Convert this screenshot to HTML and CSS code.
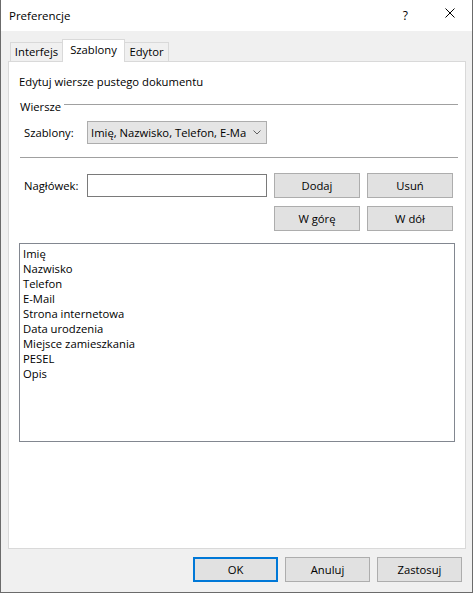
FILE: index.html
```html
<!DOCTYPE html>
<html lang="pl">
<head>
<meta charset="utf-8">
<title>Preferencje</title>
<link rel="stylesheet" href="styles.css">
</head>
<body>
<div class="window">
  <div class="titlebar">
    <span class="title">Preferencje</span>
    <span class="help">?</span>
    <span class="close"><svg width="10" height="10" viewBox="0 0 10 10"><path d="M0.5 0.5 L9.5 9.5 M9.5 0.5 L0.5 9.5" stroke="#000" stroke-width="1" fill="none"/></svg></span>
  </div>
  <div class="body">
    <div class="tabs">
      <div class="tab tab-first">Interfejs</div>
      <div class="tab tab-active">Szablony</div>
      <div class="tab tab-last">Edytor</div>
    </div>
    <div class="panel">
      <div class="desc">Edytuj wiersze pustego dokumentu</div>
      <div class="group-head"><span class="group-label">Wiersze</span><div class="group-rule"></div></div>
      <div class="form-row combo-row">
        <span class="field-label">Szablony:</span>
        <div class="combo">
          <span class="combo-text">Imię, Nazwisko, Telefon, E-Ma</span>
          <svg class="combo-arrow" width="8" height="5" viewBox="0 0 8 5"><path d="M0.5 0.5 L4 4 L7.5 0.5" stroke="#606060" stroke-width="1" fill="none"/></svg>
        </div>
      </div>
      <div class="separator"></div>
      <div class="edit-grid">
        <span class="field-label">Nagłówek:</span>
        <div class="textbox"></div>
        <button class="btn">Dodaj</button>
        <button class="btn">Usuń</button>
        <button class="btn btn-up">W górę</button>
        <button class="btn">W dół</button>
      </div>
      <div class="listbox">
        <div class="item">Imię</div>
        <div class="item">Nazwisko</div>
        <div class="item">Telefon</div>
        <div class="item">E-Mail</div>
        <div class="item">Strona internetowa</div>
        <div class="item">Data urodzenia</div>
        <div class="item">Miejsce zamieszkania</div>
        <div class="item">PESEL</div>
        <div class="item">Opis</div>
      </div>
    </div>
    <div class="footer">
      <button class="btn dlg-btn btn-default">OK</button>
      <button class="btn dlg-btn">Anuluj</button>
      <button class="btn dlg-btn">Zastosuj</button>
    </div>
  </div>
</div>
</body>
</html>
```
FILE: styles.css
```css
html, body {
  margin: 0;
  padding: 0;
  background: #ffffff;
}
body {
  font-family: "Open Sans", "Noto Sans", sans-serif;
  font-size: 11.25px;
  color: #000;
}
.window {
  width: 473px;
  height: 593px;
  box-sizing: border-box;
  border: 1px solid #6b6b6b;
  border-top: none;
  display: flex;
  flex-direction: column;
  overflow: hidden;
}
.titlebar {
  height: 31px;
  flex: none;
  background: #fff;
  display: flex;
  align-items: center;
  padding: 0 17px 0 8px;
}
.title {
  flex: 1;
  font-size: 11.5px;
  line-height: 15px;
  margin-top: -1px;
}
.help {
  font-size: 12px;
  line-height: 15px;
  margin-right: 37px;
  margin-top: -1px;
}
.close {
  display: flex;
  width: 10px;
  height: 10px;
  margin-top: -5px;
}
.body {
  flex: 1;
  background: #f0f0f0;
  display: flex;
  flex-direction: column;
  padding: 8px 6px 0 7px;
}
.tabs {
  height: 22px;
  display: flex;
  align-items: flex-end;
  padding-left: 2px;
  flex: none;
}
.tab {
  box-sizing: border-box;
  height: 19px;
  border: 1px solid #d9d9d9;
  border-bottom: none;
  background: #f0f0f0;
  text-align: center;
  line-height: 18px;
  white-space: nowrap;
}
.tab-first { width: 53px; }
.tab-active {
  width: 63px;
  height: 23px;
  margin-left: -1px;
  margin-bottom: -1px;
  background: #fff;
  position: relative;
  z-index: 1;
  line-height: 19px;
}
.tab-last {
  width: 45px;
  margin-left: -1px;
}
.panel {
  height: 488px;
  box-sizing: border-box;
  flex: none;
  background: #fff;
  border: 1px solid #d9d9d9;
  padding: 12px 7px 0 10px;
  display: flex;
  flex-direction: column;
}
.desc {
  line-height: 15px;
}
.group-head {
  margin-top: 10px;
  display: flex;
  align-items: flex-start;
  line-height: 15px;
  padding-left: 1px;
}
.group-rule {
  flex: 1;
  height: 1px;
  background: #a0a0a0;
  margin-top: 5px;
  margin-left: 3px;
}
.form-row {
  display: grid;
  grid-template-columns: 61px 180px;
  column-gap: 7px;
  align-items: center;
}
.combo-row {
  margin-top: 7px;
}
.field-label {
  padding-left: 5px;
  line-height: 15px;
  white-space: nowrap;
}
.combo {
  box-sizing: border-box;
  height: 23px;
  border: 1px solid #adadad;
  background: #e5e5e5;
  display: flex;
  align-items: center;
  padding: 0 5px 0 3px;
}
.combo-text {
  width: 158px;
  overflow: hidden;
  white-space: nowrap;
  line-height: 15px;
}
.combo-arrow {
  margin-left: auto;
}
.separator {
  margin-top: 13px;
  height: 1px;
  background: #a0a0a0;
  margin-left: 1px;
}
.edit-grid {
  margin-top: 15px;
  display: grid;
  grid-template-columns: 61px 180px 86px 86px;
  grid-auto-rows: 25px;
  column-gap: 7px;
  row-gap: 8px;
  align-items: center;
}
.textbox {
  box-sizing: border-box;
  height: 23px;
  border: 1px solid #7a7a7a;
  background: #fff;
}
.btn {
  box-sizing: border-box;
  height: 25px;
  border: 1px solid #adadad;
  background: #e1e1e1;
  font-family: inherit;
  font-size: 11.25px;
  color: #000;
  padding: 0;
  margin: 0;
  line-height: 15px;
}
.btn-up {
  grid-column: 3;
}
.listbox {
  margin-top: 12px;
  width: 436px;
  height: 199px;
  box-sizing: border-box;
  border: 1px solid #828790;
  padding: 2px 3px;
  margin-left: 0;
}
.item {
  line-height: 15px;
}
.footer {
  display: flex;
  justify-content: flex-end;
  gap: 7px;
  padding: 8px 4px 0 0;
}
.dlg-btn {
  width: 85px;
}
.btn-default {
  border: 2px solid #0078d7;
}
```
